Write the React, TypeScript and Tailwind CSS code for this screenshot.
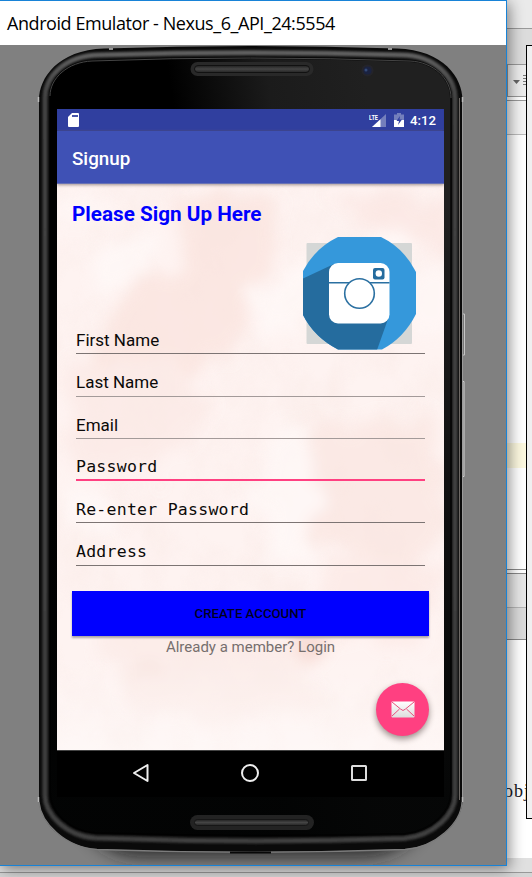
import React from "react";

const sans = "font-[Roboto,sans-serif] text-[17px]";
const mono = "font-['DejaVu_Sans_Mono',monospace] text-[16.5px] tracking-[0.25px] pt-[1px]";

const fields = [
  { label: "First Name", font: sans, line: "h-px bg-[#7c7473]" },
  { label: "Last Name", font: sans, line: "h-px bg-[#a39a99]" },
  { label: "Email", font: sans, line: "h-px bg-[#a39a99]" },
  { label: "Password", font: mono, line: "h-[2px] bg-[#ff4081]" },
  { label: "Re-enter Password", font: mono, line: "h-px bg-[#7c7473]" },
  { label: "Address", font: mono, line: "h-px bg-[#7c7473]" },
];

function Editor() {
  return (
    <div className="flex h-[877px] w-full flex-col items-end bg-white">
      <div className="flex w-[25px] flex-1 flex-col">
        <div className="h-[29px] border-b border-[#999] bg-[#eaeaea]" />
        <div className="h-[35px] bg-[#dcdcdc]" />
        <div className="flex h-[33px] items-center border border-[#999] bg-[#ececec] pl-[5px]">
          <svg width="20" height="14" viewBox="0 0 20 14" className="shrink-0">
            <path d="M0 6h7L3.500 10z" fill="#666" />
            <path d="M10 1.500h9M10 4.500h9M10 7.500h9M10 10.500h9" stroke="#777" strokeWidth="1" />
          </svg>
        </div>
        <div className="h-[4px] border-b border-[#999] bg-white" />
        <div className="h-[34px] border-b border-[#bbb] bg-[#f3f3f3]" />
        <div className="h-[308px]" />
        <div className="h-[25px] bg-[#fcf8df]" />
        <div className="h-[102px] border-b border-[#888]" />
        <div className="h-[4px] border-b border-[#888]" />
        <div className="h-[34px] border-b border-[#b5b5b5] bg-[#e6e6e6]" />
        <div className="h-[32px] border-b border-[#888] bg-[#dadada]" />
        <div className="flex-1 pt-[141px] font-['Liberation_Serif',serif] text-[18px] leading-[20px] tracking-[1px] text-[#16161d]">
          <span className="-ml-[3px]">obj</span>
        </div>
      </div>
      <div className="h-[15px] w-full border-b border-[#999] bg-[#e0e0e0]" />
      <div className="h-[4px] w-full bg-[#d5d5d5]" />
    </div>
  );
}

const shell =
  "M39 100C39 78 58 50 104 48.500Q250 43.500 397 48.500C444 50 462.500 78 462.500 100V800C462.500 821 440 846 405 849Q250 855 96 849C62 846 39 821 39 800Z";
const rim =
  "M46 100C46 78 66 57 100 56.500Q250 52 403 56.500C437 57 456 80 456 100V797C456 815 436 837 405 840Q250 845 96 839.500C66 837 46 815 46 797Z";
const glass =
  "M50 96C50 78 68 62 92 61Q250 55 410 61C433 62 451 78 451 98V793C451 812 432 831 405 834Q250 838 95 833C69 831 50 812 50 793Z";

function PhoneFrame() {
  return (
    <svg className="absolute left-0 top-0" width="506" height="820" viewBox="0 45 506 820">
      <defs>
        <linearGradient id="face" x1="50" y1="700" x2="450" y2="640" gradientUnits="userSpaceOnUse">
          <stop offset=".52" stopColor="#000" />
          <stop offset=".76" stopColor="#1b1b1b" />
          <stop offset="1" stopColor="#202020" />
        </linearGradient>
        <linearGradient id="lower" x1="0" y1="200" x2="0" y2="800" gradientUnits="userSpaceOnUse">
          <stop offset="0" stopColor="#000" stopOpacity="0" />
          <stop offset=".5" stopColor="#000" stopOpacity=".5" />
          <stop offset="1" stopColor="#030404" stopOpacity=".9" />
        </linearGradient>
        <linearGradient id="edge" x1="0" y1="47" x2="0" y2="850" gradientUnits="userSpaceOnUse">
          <stop offset="0" stopColor="#666" />
          <stop offset=".06" stopColor="#444" />
          <stop offset="1" stopColor="#404040" />
        </linearGradient>
        <linearGradient id="bar" x1="0" y1="0" x2="0" y2="1">
          <stop offset="0" stopColor="#202020" />
          <stop offset=".5" stopColor="#444" />
          <stop offset="1" stopColor="#252525" />
        </linearGradient>
        <filter id="soft" x="-20%" y="-60%" width="140%" height="220%">
          <feGaussianBlur stdDeviation="9" />
        </filter>
        <filter id="edgeSoft">
          <feGaussianBlur stdDeviation="1.200" />
        </filter>
      </defs>
      <path d="M70 790Q86 855 140 857H360Q420 857 438 790Z" fill="#1a1a1a" opacity=".85" filter="url(#soft)" />
      <rect x="461" y="314" width="4" height="41" fill="#777" />
      <path d="M462 314h2.500v41h-2.500" fill="none" stroke="#c4c4c4" />
      <path d="M462 381.500h2v95h-2" fill="#777" stroke="#d0d0d0" />
      <path d={shell} fill="#0a0a0a" />
      <path d={rim} fill="none" stroke="url(#edge)" strokeWidth="5" filter="url(#edgeSoft)" transform="translate(-1 -1.500)" />
      <path d={glass} fill="url(#face)" />
      <path d={glass} fill="url(#lower)" />
      <path d={glass} fill="none" stroke="#000" strokeWidth="2" opacity=".6" />
      <path d="M50 96C50 78 68 62 92 61Q250 55 410 61C433 62 451 78 451 98" fill="none" stroke="#454545" />
      <path d="M459.500 98V800" fill="none" stroke="#6c6763" strokeWidth="1" />
      <path d="M462.500 98V800" fill="none" stroke="#9b9b9b" strokeWidth="1" />
      <path d="M39 802C41 823 65 847 97 849.500Q250 855 405 849.500C436 847 461 823 462 802" fill="none" stroke="#7c7c7c" strokeWidth="1.300" />
      <path d="M230 851.500h41v2h-41z" fill="#080808" />
      <rect x="190.500" y="62" width="123" height="14" rx="7" fill="#292929" />
      <rect x="194.500" y="65.500" width="115" height="7" rx="3.500" fill="url(#bar)" stroke="#111" />
      <rect x="190" y="815" width="124" height="15" rx="7.500" fill="#232323" />
      <rect x="194.500" y="819.500" width="114" height="6" rx="3" fill="url(#bar)" stroke="#161616" />
      <circle cx="367.500" cy="70.500" r="6" fill="#24242a" />
      <circle cx="367.500" cy="70.500" r="4" fill="#1a2240" />
      <circle cx="366" cy="70" r="1.500" fill="#344a77" />
      <path d="M109 49h4M388 49h4M38.500 97v5M462.500 97v5M38.500 797v5M462.500 797v5" stroke="#bbb" strokeWidth="1.500" />
    </svg>
  );
}

function Watercolor() {
  return (
    <svg className="absolute inset-0" width="387" height="567" viewBox="0 0 387 567">
      <defs>
        <filter id="wash" x="-20%" y="-20%" width="140%" height="140%">
          <feTurbulence type="fractalNoise" baseFrequency=".03" numOctaves="5" seed="6" result="n" />
          <feDisplacementMap in="SourceGraphic" in2="n" scale="45" xChannelSelector="R" yChannelSelector="G" result="d" />
          <feGaussianBlur in="d" stdDeviation="7" />
        </filter>
        <filter id="mottle" x="0" y="0" width="100%" height="100%">
          <feTurbulence type="fractalNoise" baseFrequency=".022 .016" numOctaves="5" seed="14" />
          <feColorMatrix values="0 0 0 0 .96  0 0 0 0 .84  0 0 0 0 .81  2.200 0 0 0 -.85" />
        </filter>
        <linearGradient id="foot" x1="0" y1="0" x2="0" y2="1">
          <stop offset="0" stopColor="#fff" stopOpacity="0" />
          <stop offset="1" stopColor="#fff" stopOpacity=".4" />
        </linearGradient>
      </defs>
      <rect width="387" height="567" fill="#fef3f1" />
      <rect width="387" height="567" filter="url(#mottle)" opacity=".7" />
      <g filter="url(#wash)" opacity=".65">
        <path d="M115 10h105l-15 80-30 70-90 80-65-20 30-90 70-50z" fill="#fae2dc" />
        <path d="M270 10h127v55l-70-10z" fill="#fbe5e1" />
        <path d="M10 180l110-5 30 60-50 60-90-15z" fill="#fbe8e4" />
        <path d="M250 240l130-10 10 120-50 60-100-70z" fill="#fae5e0" />
        <path d="M30 420l120 20 90 10 20 70-100 20-90-20z" fill="#fbeae6" />
        <path d="M260 380l125 5-25 70-80 5z" fill="#fce8e4" />
        <path d="M45 50l55 10-5 40-50 5zM185 110l150-60 10 15-130 85z" fill="#fffaf9" />
        <path d="M225 235l40 60-5 75-45 10-20-75zM10 300l60 20-20 40-40-10z" fill="#fffaf9" />
        <path d="M0 10h60v20l-60 20zM350 95l47-25v80l-35 5z" fill="#fff8f7" />
        <ellipse cx="253" cy="460" rx="14" ry="17" fill="#f5d3cb" />
        <ellipse cx="90" cy="487" rx="20" ry="11" fill="#f7dfd9" />
      </g>
      <rect y="467" width="387" height="100" fill="url(#foot)" />
    </svg>
  );
}

function CameraLogo() {
  return (
    <div className="absolute left-[246px] top-[52px]">
      <svg width="113" height="114" viewBox="0 0 113 114">
        <defs>
          <clipPath id="disc">
            <path d="M35 1H78Q101 12 113 36V78Q101 102 79 113.500H35Q11 101 0 79V35Q12 12 35 1Z" />
          </clipPath>
        </defs>
        <rect x="3.500" y="7" width="105.500" height="101" rx="1" fill="#d5d7d6" />
        <g clipPath="url(#disc)">
          <path d="M0 0h113v114H0z" fill="#3598db" />
          <path d="M-1 43L31 28 85 83 74 114H0z" fill="#256c9e" />
        </g>
        <rect x="26" y="27" width="60.500" height="60.500" rx="9" fill="#fff" />
        <path d="M26 46.700h60.500" stroke="#2b70a1" strokeWidth="1.400" />
        <circle cx="56.500" cy="57.500" r="14.800" fill="#fff" stroke="#2b70a1" strokeWidth="1.600" />
        <rect x="70" y="32" width="11.500" height="11.500" rx="2" fill="#256c9e" />
        <circle cx="75.800" cy="37.500" r="3.200" fill="#fff" />
      </svg>
    </div>
  );
}

function Screen() {
  return (
    <div className="flex h-[688px] w-[387px] flex-col overflow-hidden bg-black font-[Roboto,sans-serif]">
      <div className="flex h-[22px] items-center bg-[#303f9f] pl-[11px] pr-[8px] text-white shadow-[inset_0_-1px_1px_#28368c]">
        <svg width="11" height="14" viewBox="0 0 11 14">
          <path d="M4 0h6q1 0 1 1v12q0 1-1 1H1q-1 0-1-1V4z" fill="#fff" />
          <path d="M4 3h6" stroke="#4855a9" strokeWidth="2" />
        </svg>
        <svg width="18" height="15" viewBox="0 0 18 15" className="ml-auto">
          <path d="M17 1v13H3z" fill="#747fbc" />
          <path d="M11.500 6.200V14H3z" fill="#fff" />
          <text x="0" y="6.500" fontSize="7.500" fontWeight="700" fill="#fff" textLength="9" lengthAdjust="spacingAndGlyphs">LTE</text>
        </svg>
        <svg width="10" height="14" viewBox="0 0 10 14" className="ml-[7px]">
          <path d="M0 1.500h3V0h4v1.500h3V7H0z" fill="#747fbc" />
          <path d="M0 7h10v7H0z" fill="#fff" />
          <path d="M6 3L2.500 8H5l-1 4 4-5.500H5.500z" fill="#303f9f" />
        </svg>
        <span className="ml-[6px] pt-px text-[13.200px] font-medium">4:12</span>
      </div>
      <div className="z-10 flex h-[53px] items-center border-b border-[#6872b5] bg-[#3f51b5] pl-[15px] pt-[4px] text-[18.800px] font-medium text-white shadow-[0_1px_3px_#a0908f]">
        Signup
      </div>
      <div className="relative h-[566px] overflow-hidden px-[15px]">
        <Watercolor />
        <div className="relative flex flex-col">
          <h1 className="h-[128px] pt-[17px] text-[20.700px] font-bold leading-[26px] text-[#0000ff]">Please Sign Up Here</h1>
          <div className="flex flex-col pl-[4px] pr-[4px]">
            {fields.map((field) => (
              <div key={field.label} className="flex h-[42.300px] flex-col justify-end">
                <div className={`flex h-[25px] items-center text-[#0b0908] ${field.font}`}>{field.label}</div>
                <div className={field.line} />
              </div>
            ))}
          </div>
          <button className="mt-[25px] h-[45px] w-[357px] bg-[#0000ff] pt-[2px] text-[13.200px] font-medium text-[#00001f] shadow-[0_2px_2px_#aaa4a8]">
            CREATE ACCOUNT
          </button>
          <p className="text-center text-[15px] leading-[22px] text-[#766f6e]">Already a member? Login</p>
        </div>
        <CameraLogo />
        <div className="absolute left-[319px] top-[499px] flex size-[53px] items-center justify-center rounded-full bg-[#ff4081] shadow-[0_3px_6px_#9b8d8b]">
          <svg width="24" height="17" viewBox="0 0 24 17">
            <defs>
              <linearGradient id="letter" x2="0" y2="1"><stop stopColor="#fff" /><stop offset="1" stopColor="#ddd" /></linearGradient>
            </defs>
            <rect x=".500" y=".500" width="23" height="16" rx="1" fill="url(#letter)" />
            <path d="M1 1l8.500 7q2.500 3 5 0L23 1M1 15l7.500-7M23 15l-7.500-7" fill="none" stroke="#e94f7d" />
          </svg>
        </div>
      </div>
      <div className="flex h-[47px] items-center justify-between border-t border-[#444] pb-[2px] pl-[75px] pr-[76px]">
        <svg width="18" height="20" viewBox="0 0 18 20"><path d="M2 10L15.500 2v16z" fill="none" stroke="#eee" strokeWidth="2" strokeLinejoin="round" /></svg>
        <svg width="20" height="20" viewBox="0 0 20 20"><circle cx="10" cy="10" r="8" fill="none" stroke="#eee" strokeWidth="2" /></svg>
        <svg width="18" height="18" viewBox="0 0 18 18"><rect x="2" y="2" width="14" height="14" rx=".500" fill="none" stroke="#ddd" strokeWidth="2" /></svg>
      </div>
    </div>
  );
}

export default function App() {
  return (
    <main className="relative h-[877px] w-[532px] overflow-hidden bg-white">
      <Editor />
      <div className="absolute left-0 top-0 h-[866px] w-[507px] border-b border-r border-t border-[#1883d7] bg-[#808080] shadow-[2px_3px_14px_#0000007a]">
        <header className="flex h-[44px] items-center bg-white pl-[7px] font-['Open_Sans',sans-serif] text-[18px] tracking-[-0.430px] text-black">
          <span className="whitespace-nowrap">Android Emulator - Nexus_6_API_24:5554</span>
        </header>
        <div className="relative h-[820px] pl-[57px] pt-[64px]">
          <PhoneFrame />
          <div className="relative"><Screen /></div>
        </div>
      </div>
      <div className="absolute left-[526px] top-[45px] h-[774px] w-[10px] border border-black bg-[#f0f0f0]" />
    </main>
  );
}
